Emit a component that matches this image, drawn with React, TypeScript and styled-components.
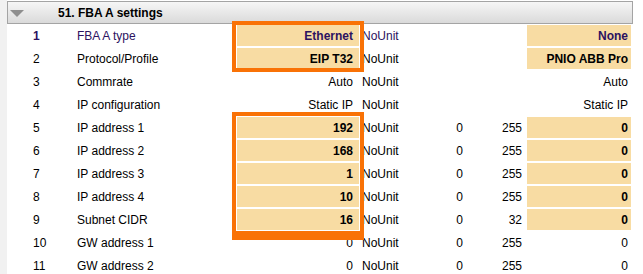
import styled, { createGlobalStyle } from 'styled-components';

const GlobalStyle = createGlobalStyle`
  html, body {
    margin: 0;
    padding: 0;
    background: #ffffff;
    overflow: hidden;
  }

  body {
    font-family: "Liberation Sans", Arial, sans-serif;
    font-size: 12px;
    color: #000000;
  }
`;

type Row = {
  index: number;
  name: string;
  value: string;
  unit: string;
  min?: string;
  max?: string;
  def: string;
  edited?: boolean;
};

const ROWS: Row[] = [
  { index: 1, name: 'FBA A type', value: 'Ethernet', unit: 'NoUnit', def: 'None', edited: true },
  { index: 2, name: 'Protocol/Profile', value: 'EIP T32', unit: 'NoUnit', def: 'PNIO ABB Pro', edited: true },
  { index: 3, name: 'Commrate', value: 'Auto', unit: 'NoUnit', def: 'Auto' },
  { index: 4, name: 'IP configuration', value: 'Static IP', unit: 'NoUnit', def: 'Static IP' },
  { index: 5, name: 'IP address 1', value: '192', unit: 'NoUnit', min: '0', max: '255', def: '0', edited: true },
  { index: 6, name: 'IP address 2', value: '168', unit: 'NoUnit', min: '0', max: '255', def: '0', edited: true },
  { index: 7, name: 'IP address 3', value: '1', unit: 'NoUnit', min: '0', max: '255', def: '0', edited: true },
  { index: 8, name: 'IP address 4', value: '10', unit: 'NoUnit', min: '0', max: '255', def: '0', edited: true },
  { index: 9, name: 'Subnet CIDR', value: '16', unit: 'NoUnit', min: '0', max: '32', def: '0', edited: true },
  { index: 10, name: 'GW address 1', value: '0', unit: 'NoUnit', min: '0', max: '255', def: '0' },
  { index: 11, name: 'GW address 2', value: '0', unit: 'NoUnit', min: '0', max: '255', def: '0' },
];

const Page = styled.div`
  display: flex;
  align-items: stretch;
  min-height: 274px;
  position: relative;
`;

const Gutter = styled.div`
  width: 7px;
  flex: none;
  background: #f1f1f1;
`;

const Panel = styled.div`
  width: 626px;
  flex: none;
  padding-top: 1px;
`;

const GroupHeader = styled.div`
  height: 23px;
  box-sizing: border-box;
  border: 1px solid #a4a4a4;
  background: linear-gradient(to bottom, #f6f6f6, #dadada);
  display: flex;
  align-items: center;
  font-size: 12px;
  font-weight: 700;
`;

const Caret = styled.svg`
  width: 14px;
  height: 7px;
  margin-left: 2px;
  margin-right: 34px;
  margin-top: 1px;
`;

const Table = styled.div`
  display: grid;
  grid-template-columns: 70px 159px 124px 60px 44px 62px 106px;
  grid-auto-rows: 23px;
`;

const Cell = styled.div<{ $align?: 'left' | 'right'; $pad?: string; $selected?: boolean; $bold?: boolean }>`
  display: flex;
  align-items: center;
  justify-content: ${({ $align }) => ($align === 'right' ? 'flex-end' : 'flex-start')};
  padding: ${({ $pad }) => $pad ?? '0'};
  white-space: nowrap;
  color: ${({ $selected }) => ($selected ? '#2c1260' : '#000000')};
  font-weight: ${({ $bold }) => ($bold ? 700 : 400)};
`;

const ValueCell = styled(Cell)<{ $edited?: boolean }>`
  box-sizing: border-box;
  border: 1px solid #ffffff;
  background: ${({ $edited }) => ($edited ? '#f8dca3' : 'transparent')};
  font-weight: ${({ $edited }) => ($edited ? 700 : 400)};
`;

// orange frames drawn over the edited value cells
const Highlight = styled.div<{ $top: number; $height: number; $bottom?: number }>`
  position: absolute;
  left: 232px;
  width: 132px;
  top: ${({ $top }) => $top}px;
  height: ${({ $height }) => $height}px;
  box-sizing: border-box;
  border: 4px solid #f97206;
  border-bottom-width: ${({ $bottom }) => $bottom ?? 4}px;
  pointer-events: none;
`;

export default function App() {
  return (
    <>
      <GlobalStyle />
      <Page>
        <Gutter />
        <Panel>
          <GroupHeader>
            <Caret viewBox="0 0 14 7">
              <polygon points="0,0 14,0 7,7" fill="#8e8e8e" />
            </Caret>
            51. FBA A settings
          </GroupHeader>
          <Table>
            {ROWS.map((row) => {
              const sel = row.index === 1;
              return [
                <Cell key={`i${row.index}`} $pad="0 0 0 26px" $selected={sel} $bold={sel}>
                  {row.index}
                </Cell>,
                <Cell key={`n${row.index}`} $selected={sel}>
                  {row.name}
                </Cell>,
                <ValueCell key={`v${row.index}`} $align="right" $pad="0 6px 0 0" $edited={row.edited} $selected={sel}>
                  {row.value}
                </ValueCell>,
                <Cell key={`u${row.index}`} $pad="0 0 0 2px" $selected={sel}>
                  {row.unit}
                </Cell>,
                <Cell key={`mn${row.index}`} $align="right" $pad="0 1px 0 0">
                  {row.min ?? ''}
                </Cell>,
                <Cell key={`mx${row.index}`} $align="right" $pad="0 4px 0 0">
                  {row.max ?? ''}
                </Cell>,
                <ValueCell key={`d${row.index}`} $align="right" $pad="0 3px 0 0" $edited={row.edited} $selected={sel}>
                  {row.def}
                </ValueCell>,
              ];
            })}
          </Table>
        </Panel>
        <Highlight $top={21} $height={51} />
        <Highlight $top={112} $height={128} $bottom={9} />
      </Page>
    </>
  );
}
